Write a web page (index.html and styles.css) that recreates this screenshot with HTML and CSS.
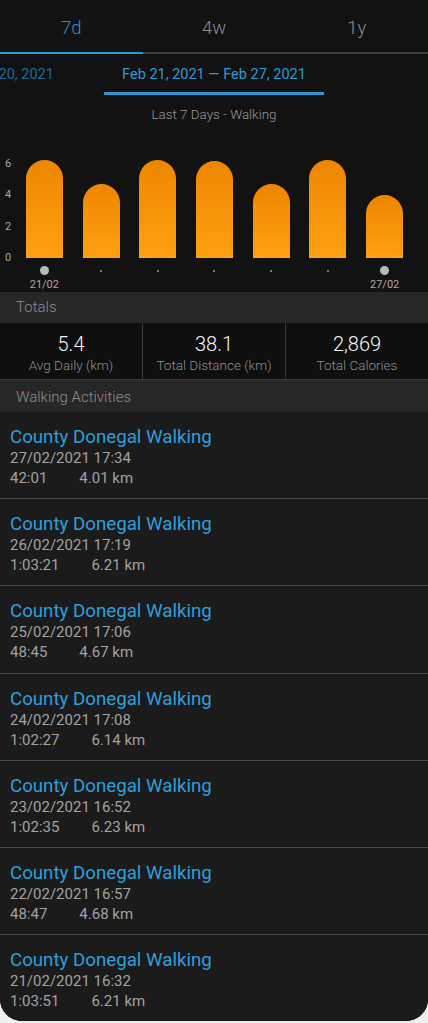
FILE: index.html
```html
<!DOCTYPE html>
<html>
<head>
	<title>Walking - Last 7 Days</title>
	<link rel="stylesheet" href="styles.css">
</head>
<body>
	<div class="screen">
		<div class="tabs">
			<div class="tab is-active">7d</div>
			<div class="tab">4w</div>
			<div class="tab">1y</div>
		</div>

		<div class="ranges">
			<div class="range-track">
				<div class="range">Feb 14, 2021 — Feb 20, 2021</div>
				<div class="range is-active">Feb 21, 2021 — Feb 27, 2021</div>
			</div>
		</div>

		<div class="subtitle">Last 7 Days - Walking</div>

		<div class="chart">
			<div class="axis">
				<span>6</span>
				<span>4</span>
				<span>2</span>
				<span>0</span>
			</div>
			<div class="plot">
				<div class="col">
					<div class="bar-wrap"><div class="bar" style="height: 97.8px"></div></div>
					<div class="marker"><span class="dot is-big"></span></div>
					<div class="day">21/02</div>
				</div>
				<div class="col">
					<div class="bar-wrap"><div class="bar" style="height: 73.7px"></div></div>
					<div class="marker"><span class="dot"></span></div>
					<div class="day"></div>
				</div>
				<div class="col">
					<div class="bar-wrap"><div class="bar" style="height: 98.1px"></div></div>
					<div class="marker"><span class="dot"></span></div>
					<div class="day"></div>
				</div>
				<div class="col">
					<div class="bar-wrap"><div class="bar" style="height: 96.7px"></div></div>
					<div class="marker"><span class="dot"></span></div>
					<div class="day"></div>
				</div>
				<div class="col">
					<div class="bar-wrap"><div class="bar" style="height: 73.6px"></div></div>
					<div class="marker"><span class="dot"></span></div>
					<div class="day"></div>
				</div>
				<div class="col">
					<div class="bar-wrap"><div class="bar" style="height: 97.8px"></div></div>
					<div class="marker"><span class="dot"></span></div>
					<div class="day"></div>
				</div>
				<div class="col">
					<div class="bar-wrap"><div class="bar" style="height: 63.2px"></div></div>
					<div class="marker"><span class="dot is-big"></span></div>
					<div class="day">27/02</div>
				</div>
			</div>
		</div>

		<div class="section-head">Totals</div>
		<div class="totals">
			<div class="total">
				<div class="total-value">5.4</div>
				<div class="total-label">Avg Daily (km)</div>
			</div>
			<div class="total">
				<div class="total-value">38.1</div>
				<div class="total-label">Total Distance (km)</div>
			</div>
			<div class="total">
				<div class="total-value">2,869</div>
				<div class="total-label">Total Calories</div>
			</div>
		</div>

		<div class="section-head is-tall">Walking Activities</div>
		<div class="activities">
			<div class="activity">
				<div class="activity-title">County Donegal Walking</div>
				<div class="activity-date">27/02/2021 17:34</div>
				<div class="activity-stats"><span>42:01</span><span>4.01 km</span></div>
			</div>
			<div class="activity">
				<div class="activity-title">County Donegal Walking</div>
				<div class="activity-date">26/02/2021 17:19</div>
				<div class="activity-stats"><span>1:03:21</span><span>6.21 km</span></div>
			</div>
			<div class="activity">
				<div class="activity-title">County Donegal Walking</div>
				<div class="activity-date">25/02/2021 17:06</div>
				<div class="activity-stats"><span>48:45</span><span>4.67 km</span></div>
			</div>
			<div class="activity">
				<div class="activity-title">County Donegal Walking</div>
				<div class="activity-date">24/02/2021 17:08</div>
				<div class="activity-stats"><span>1:02:27</span><span>6.14 km</span></div>
			</div>
			<div class="activity">
				<div class="activity-title">County Donegal Walking</div>
				<div class="activity-date">23/02/2021 16:52</div>
				<div class="activity-stats"><span>1:02:35</span><span>6.23 km</span></div>
			</div>
			<div class="activity">
				<div class="activity-title">County Donegal Walking</div>
				<div class="activity-date">22/02/2021 16:57</div>
				<div class="activity-stats"><span>48:47</span><span>4.68 km</span></div>
			</div>
			<div class="activity">
				<div class="activity-title">County Donegal Walking</div>
				<div class="activity-date">21/02/2021 16:32</div>
				<div class="activity-stats"><span>1:03:51</span><span>6.21 km</span></div>
			</div>
		</div>
	</div>
</body>
</html>
```

FILE: styles.css
```css
body {
	margin: 0;
	background: #eef0ee;
	font-family: Roboto, "Noto Sans", Arial, sans-serif;
}

.screen {
	background: #121212;
	border-radius: 0 0 22px 22px;
	overflow: hidden;
}

/* period tabs */

.tabs {
	display: flex;
}

.tab {
	flex: 1;
	height: 52px;
	line-height: 56px;
	text-align: center;
	font-size: 18.5px;
	font-weight: 300;
	color: #8c8c8c;
	border-bottom: 2px solid #3e3e3e;
}

.tab.is-active {
	color: #2b8fc6;
	border-bottom-color: #2a9ad6;
}

/* date ranges */

.ranges {
	overflow: hidden;
}

.range-track {
	display: flex;
	gap: 32px;
	margin-left: -148px;
}

.range {
	flex: 0 0 220px;
	text-align: center;
	font-size: 14.5px;
	line-height: 17px;
	color: #1f6b96;
	padding: 12px 0 9px;
	border-bottom: 3px solid transparent;
}

.range.is-active {
	color: #2b9ad6;
	border-bottom-color: #2a9ad6;
}

.subtitle {
	margin-top: 12px;
	text-align: center;
	font-size: 13.4px;
	font-weight: 300;
	line-height: 16px;
	color: #9a9a9a;
}

/* chart */

.chart {
	display: flex;
	padding-top: 7px;
	height: 169px;
	box-sizing: border-box;
}

.axis {
	width: 16px;
	height: 106px;
	margin-top: 28px;
	display: flex;
	flex-direction: column;
	justify-content: space-between;
	align-items: center;
	font-size: 11px;
	line-height: 12px;
	color: #a8a8a8;
}

.plot {
	width: 397px;
	display: grid;
	grid-template-columns: repeat(7, 1fr);
}

.col {
	display: flex;
	flex-direction: column;
	align-items: center;
}

.bar-wrap {
	height: 128px;
	display: flex;
	align-items: flex-end;
}

.bar {
	width: 37px;
	border-radius: 18.5px 18.5px 0 0;
	background: linear-gradient(to bottom, #ee8600, #fea010);
}

.marker {
	height: 9px;
	margin-top: 8px;
	display: flex;
	align-items: center;
	justify-content: center;
}

.dot {
	width: 2px;
	height: 2px;
	border-radius: 50%;
	background: #9a9a9a;
}

.dot.is-big {
	width: 9px;
	height: 9px;
	background: #b9b9b9;
}

.day {
	margin-top: 3px;
	font-size: 11px;
	line-height: 13px;
	height: 13px;
	color: #a8a8a8;
}

/* totals */

.section-head {
	background: #272727;
	height: 31px;
	line-height: 31px;
	padding-left: 16px;
	font-size: 15px;
	font-weight: 300;
	color: #8e8e8e;
}

.section-head.is-tall {
	height: 32px;
	line-height: 34px;
}

.totals {
	display: flex;
	background: #0f0f0f;
	border-bottom: 1px solid #3a3a3a;
}

.total {
	flex: 1;
	height: 56px;
	text-align: center;
	border-left: 1px solid #3a3a3a;
}

.total:first-child {
	border-left: none;
}

.total-value {
	margin-top: 9px;
	font-size: 20px;
	font-weight: 300;
	line-height: 24px;
	color: #f4f4f4;
}

.total-label {
	font-size: 13.5px;
	font-weight: 300;
	line-height: 18px;
	color: #8e8e8e;
}

/* activities */

.activities {
	background: #1b1b1b;
}

.activity {
	padding: 14px 10px 10.2px;
	border-top: 1px solid #4a4a4a;
}

.activity:first-child {
	border-top: none;
}

.activity-title {
	font-size: 18.7px;
	line-height: 22px;
	color: #2c9fdc;
}

.activity-date,
.activity-stats {
	font-size: 15px;
	line-height: 20px;
	color: #a2a2a2;
}

.activity-stats {
	display: flex;
	gap: 32px;
}
```
